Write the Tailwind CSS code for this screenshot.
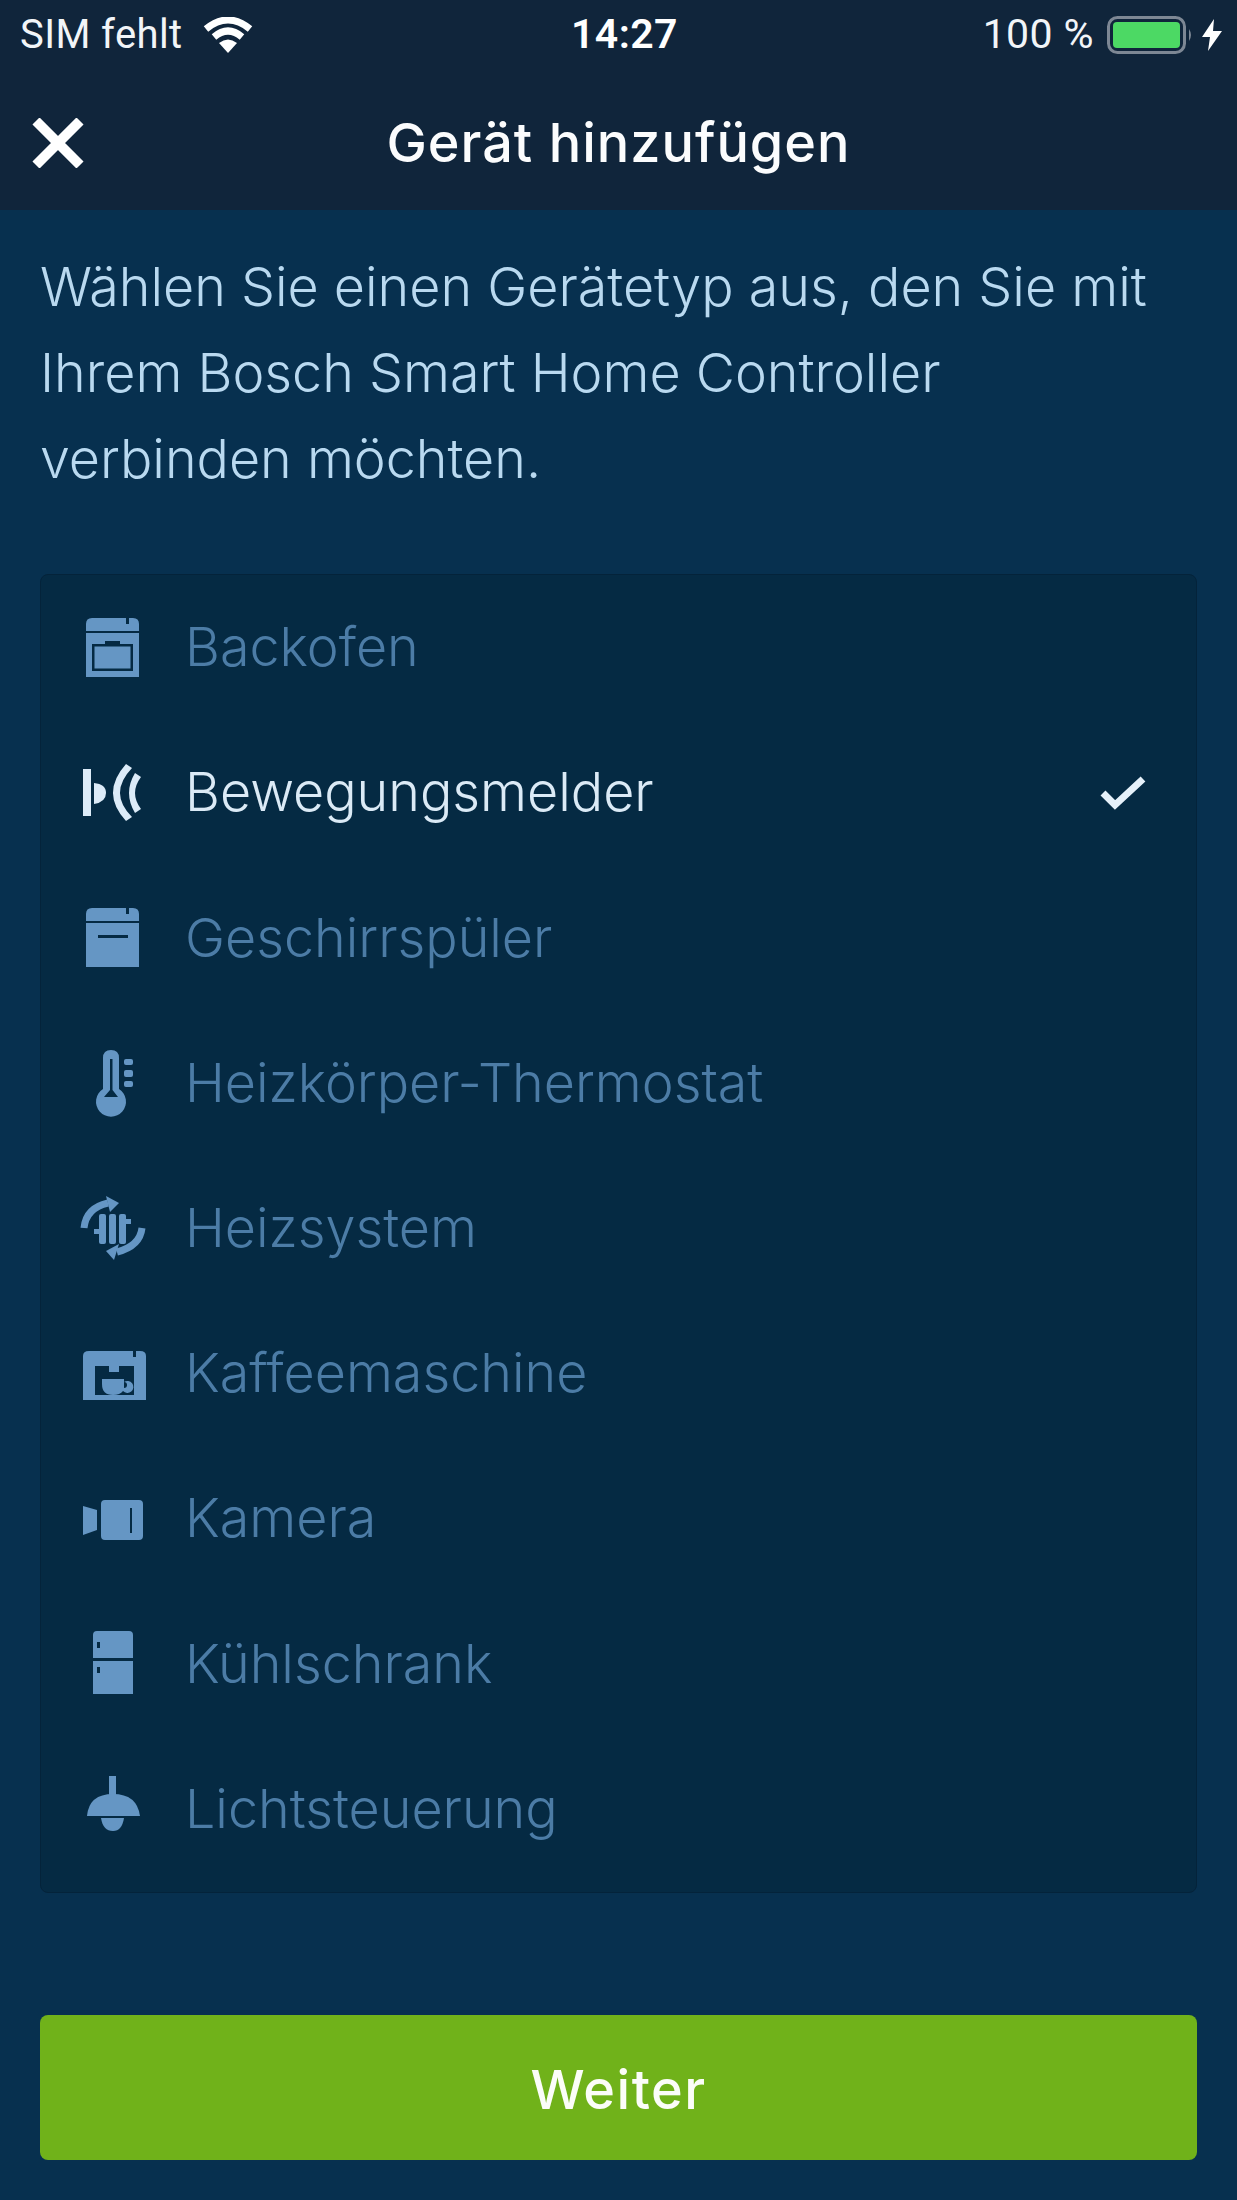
<!DOCTYPE html>
<html lang="de">
<head>
  <meta charset="UTF-8">
  <meta name="viewport" content="width=device-width, initial-scale=1.0">
  <title>Gerät hinzufügen</title>
  <script src="https://cdn.jsdelivr.net/npm/@tailwindcss/browser@4"></script>
</head>
<body class="bg-[#07304f] font-['Inter',sans-serif] w-[1237px] h-[2200px] overflow-hidden">

  <!-- Status bar + nav -->
  <header class="bg-[#10253b] h-[210px] text-white">
    <div class="h-[70px] flex items-center justify-between pl-[20px] pr-[15px] relative">
      <div class="flex items-center gap-[20px]">
        <span class="text-[40px] tracking-[0.4px] font-normal font-['Roboto',sans-serif] text-[#f2f5f8]">SIM fehlt</span>
        <svg width="50" height="36" viewBox="0 0 50 36" fill="none" stroke="#fff" stroke-width="7">
          <path d="M3 12 Q25 -6 47 12"/>
          <path d="M11 20 Q25 8 39 20"/>
          <path d="M25 36 L16 26 Q25 19 34 26 Z" fill="#fff" stroke="none"/>
        </svg>
      </div>
      <span class="absolute left-[571px] text-[41px] tracking-[0.4px] font-semibold font-['Roboto',sans-serif]">14:27</span>
      <div class="flex items-center">
        <span class="text-[41px] tracking-[0.4px] font-['Roboto',sans-serif] text-[#f2f5f8] mr-[13px]">100 %</span>
        <svg width="95" height="38" viewBox="0 0 95 38">
          <rect x="1.5" y="1.5" width="76" height="35" rx="9" fill="none" stroke="#7d8794" stroke-width="3"/>
          <rect x="6" y="6" width="67" height="26" rx="4" fill="#4cd964"/>
          <path d="M82 13 Q86 19 82 25 Z" fill="#7d8794"/>
        </svg>
        <svg width="20" height="32" viewBox="0 0 20 32" fill="#fff">
          <path d="M12 0 L0 18 H8 L6 32 L20 12 H11 Z"/>
        </svg>
      </div>
    </div>
    <div class="h-[140px] flex items-center relative pt-[4px]">
      <svg class="absolute left-[32px] top-[48px]" width="52" height="50" viewBox="0 0 52 50" stroke="#fff" stroke-width="10">
        <path d="M4 3 L48 47 M48 3 L4 47"/>
      </svg>
      <h1 class="w-full text-center text-[54px] font-medium tracking-[1px] text-[#fbfcfd]">Gerät hinzufügen</h1>
    </div>
  </header>

  <main class="px-[40px]">
    <p class="pt-[34px] text-[53.8px] font-light leading-[86px] text-[#b9d9f0] whitespace-nowrap">
      Wählen Sie einen Gerätetyp aus, den Sie mit<br>Ihrem Bosch Smart Home Controller<br>verbinden möchten.
    </p>

    <!-- Device list -->
    <ul class="mt-[72px] h-[1319px] bg-[#052a43] rounded-[8px] border border-[#04233a] text-[53.8px] font-light text-[#4c7ca6]">

      <li class="h-[145.2px] flex items-center pl-[42px]">
        <svg class="shrink-0 overflow-visible" width="60" height="60" viewBox="0 0 60 60" fill="#6596c4">
          <path d="M3 13 V6 Q3 0 9 0 H43 V6 H46 V0 H50 Q56 0 56 6 V13 Z"/>
          <path fill-rule="evenodd" d="M3 15 H56 V59 H3 Z M9 26 V53 H50 V26 H37 V23 H22 V26 Z M11.500 28.500 H47.500 V50.500 H11.500 Z"/>
        </svg>
        <span class="ml-[42px]">Backofen</span>
      </li>

      <li class="h-[145.2px] flex items-center pl-[42px] text-[#dbeaf6]">
        <svg class="shrink-0 overflow-visible" width="60" height="60" viewBox="0 0 60 60" fill="#dcebf8">
          <rect x="0" y="6" width="8" height="47"/>
          <path d="M11 20 Q23 21 23 30 Q23 39 11 41 Z"/>
          <path d="M43 1 Q17 30 43 58 L49 54 Q25 30 49 5 Z"/>
          <path d="M52 10 Q40 30 52 50 L58 46 Q46 30 58 14 Z"/>
        </svg>
        <span class="ml-[42px]">Bewegungsmelder</span>
        <svg class="ml-auto mr-[50px]" width="46" height="34" viewBox="0 0 46 34" fill="none" stroke="#e6f1fa" stroke-width="7">
          <path d="M3 17 L15 29 L43 3"/>
        </svg>
      </li>

      <li class="h-[145.2px] flex items-center pl-[42px]">
        <svg class="shrink-0 overflow-visible" width="60" height="60" viewBox="0 0 60 60" fill="#6596c4">
          <path d="M3 13 V6 Q3 0 9 0 H43 V6 H46 V0 H50 Q56 0 56 6 V13 Z"/>
          <path fill-rule="evenodd" d="M3 15 H56 V59 H3 Z M15 27 V30 H45 V27 Z"/>
        </svg>
        <span class="ml-[42px]">Geschirrspüler</span>
      </li>

      <li class="h-[145.2px] flex items-center pl-[42px]">
        <svg class="shrink-0 overflow-visible" width="60" height="60" viewBox="0 0 60 60" fill="#6596c4">
          <path fill-rule="evenodd" d="M20 5 Q20 -3 28 -3 Q36 -3 36 5 V36 A15 15 0 1 1 20 36 Z M27 6 V37 L21 44 H35 L29.500 37 V6 Z"/>
          <rect x="41" y="6" width="9" height="6" rx="2"/>
          <rect x="41" y="17" width="9" height="7" rx="2"/>
          <rect x="41" y="28" width="9" height="6" rx="2"/>
        </svg>
        <span class="ml-[42px]">Heizkörper-Thermostat</span>
      </li>

      <li class="h-[145.2px] flex items-center pl-[42px]">
        <svg class="shrink-0 overflow-visible" width="60" height="60" viewBox="0 0 60 60" fill="#6596c4">
          <path d="M1 30 Q3 10 25 5" fill="none" stroke="#6596c4" stroke-width="7"/>
          <path d="M23 -2 L36 5 L27 14 Z"/>
          <path d="M59 30 Q57 48 34 54" fill="none" stroke="#6596c4" stroke-width="7"/>
          <path d="M36 46 L23 53 L31 62 Z"/>
          <rect x="16" y="16" width="7" height="30" rx="2"/>
          <rect x="26" y="16" width="7" height="30" rx="2"/>
          <rect x="36" y="16" width="7" height="30" rx="2"/>
          <rect x="11" y="31" width="5" height="5"/>
          <rect x="43" y="21" width="5" height="5"/>
        </svg>
        <span class="ml-[42px]">Heizsystem</span>
      </li>

      <li class="h-[145.2px] flex items-center pl-[42px]">
        <svg class="shrink-0 overflow-visible" width="60" height="60" viewBox="0 0 60 60" fill="#6596c4">
          <path fill-rule="evenodd" d="M0 12 Q0 7 6 7 H50 V13 H53 V7 H57 Q63 7 63 12 V56 H0 Z M12 22 V51 H51 V22 H36 V28 H26 V22 Z"/>
          <path d="M19 35 H41 V38 A6 6 0 1 1 40 47 Q37 51 30 51 Q19 51 19 40 Z"/>
          <path d="M41 38 A3 3 0 0 1 41 44 Z" fill="#052a43"/>
        </svg>
        <span class="ml-[42px]">Kaffeemaschine</span>
      </li>

      <li class="h-[145.2px] flex items-center pl-[42px]">
        <svg class="shrink-0 overflow-visible" width="60" height="60" viewBox="0 0 60 60" fill="#6596c4">
          <path d="M0 17 L14 21 V41 L0 46 Z"/>
          <path fill-rule="evenodd" d="M22 11 H56 Q60 11 60 15 V47 Q60 51 56 51 H22 Q18 51 18 47 V15 Q18 11 22 11 Z M47 19 V44 H49 V19 Z"/>
        </svg>
        <span class="ml-[42px]">Kamera</span>
      </li>

      <li class="h-[145.2px] flex items-center pl-[42px]">
        <svg class="shrink-0 overflow-visible" width="60" height="60" viewBox="0 0 60 60" fill="#6596c4">
          <path fill-rule="evenodd" d="M14 -3 H46 Q50 -3 50 1 V24 H10 V1 Q10 -3 14 -3 Z M14 8 V14 H17 V8 Z"/>
          <path fill-rule="evenodd" d="M10 27 H50 V60 H10 Z M14 33 V39 H17 V33 Z"/>
        </svg>
        <span class="ml-[42px]">Kühlschrank</span>
      </li>

      <li class="h-[145.2px] flex items-center pl-[42px]">
        <svg class="shrink-0 overflow-visible" width="60" height="60" viewBox="0 0 60 60" fill="#6596c4">
          <rect x="26" y="-3" width="7" height="20"/>
          <path d="M4 37 Q6 15 30 15 Q54 15 57 37 Z"/>
          <path d="M18 39 H41 Q39 52 30 52 Q20 52 18 39 Z"/>
        </svg>
        <span class="ml-[42px]">Lichtsteuerung</span>
      </li>
    </ul>

    <button class="mt-[122px] w-full h-[145px] pt-[4px] bg-[#70b21a] rounded-[8px] text-[54px] font-medium tracking-[1.5px] text-[#fbfdf8]">Weiter</button>
  </main>
</body>
</html>
